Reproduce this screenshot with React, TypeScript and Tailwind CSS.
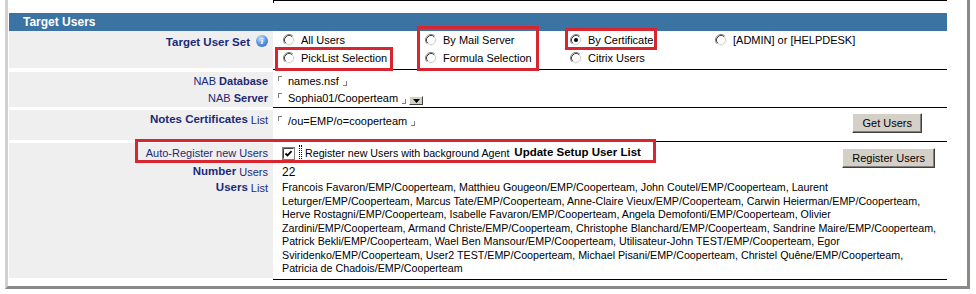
import type { ReactNode } from 'react';

const users = [
    'Francois Favaron/EMP/Cooperteam, Matthieu Gougeon/EMP/Cooperteam, John Coutel/EMP/Cooperteam, Laurent',
    'Leturger/EMP/Cooperteam, Marcus Tate/EMP/Cooperteam, Anne-Claire Vieux/EMP/Cooperteam, Carwin Heierman/EMP/Cooperteam,',
    'Herve Rostagni/EMP/Cooperteam, Isabelle Favaron/EMP/Cooperteam, Angela Demofonti/EMP/Cooperteam, Olivier',
    'Zardini/EMP/Cooperteam, Armand Christe/EMP/Cooperteam, Christophe Blanchard/EMP/Cooperteam, Sandrine Maire/EMP/Cooperteam,',
    'Patrick Bekli/EMP/Cooperteam, Wael Ben Mansour/EMP/Cooperteam, Utilisateur-John TEST/EMP/Cooperteam, Egor',
    'Sviridenko/EMP/Cooperteam, User2 TEST/EMP/Cooperteam, Michael Pisani/EMP/Cooperteam, Christel Quêne/EMP/Cooperteam,',
    'Patricia de Chadois/EMP/Cooperteam',
];

function Radio({ checked = false }: { checked?: boolean }) {
    return (
        <svg width="12" height="12" viewBox="0 0 12 12" className="shrink-0">
            <circle cx="6" cy="6" r="5" fill="#fff" />
            <path d="M2.11 9.89 A5.5 5.5 0 0 1 9.89 2.11" fill="none" stroke="#808080" />
            <path d="M9.89 2.11 A5.5 5.5 0 0 1 2.11 9.89" fill="none" stroke="#f4f4f4" />
            <path d="M2.82 9.18 A4.5 4.5 0 0 1 9.18 2.82" fill="none" stroke="#404040" />
            <path d="M9.18 2.82 A4.5 4.5 0 0 1 2.82 9.18" fill="none" stroke="#d4d0c8" />
            {checked && <circle cx="6" cy="6" r="2" fill="#000" />}
        </svg>
    );
}

function Option({ label, checked }: { label: string; checked?: boolean }) {
    return (
        <div className="flex items-center h-[18px] gap-[6px]">
            <Radio checked={checked} />
            <span>{label}</span>
        </div>
    );
}

// notes field delimiters around editable values
function Field({ children }: { children: ReactNode }) {
    return (
        <span className="inline-flex items-center">
            <span className="self-start mt-[3px] w-[4px] h-[5px] border-t border-l border-[#808080]" />
            <span className="ml-[6px]">{children}</span>
            <span className="self-end mb-[3px] ml-[4px] w-[4px] h-[5px] border-b border-r border-[#808080]" />
        </span>
    );
}

function Button({ children }: { children: ReactNode }) {
    return (
        <button className="h-[20px] px-[9px] bg-[#d4d0c8] text-[11px] text-black border border-t-white border-l-white border-r-[#404040] border-b-[#404040] shadow-[inset_-1px_-1px_0_#808080]">
            {children}
        </button>
    );
}

function Label({ children, className = '' }: { children: ReactNode; className?: string }) {
    return <div className={`flex items-center justify-end pr-[5px] text-[#1c2a78] text-[11px] ${className}`}>{children}</div>;
}

export default function App() {
    return (
        <div className="w-[976px] h-[294px] bg-white text-[11px] text-black" style={{ fontFamily: '"Liberation Sans", Arial, sans-serif' }}>
            <div className="relative ml-[5px] w-[965px] h-[289px] border-l-[3px] border-l-[#d0d0d0] border-r-[3px] border-r-[#8a8a86] border-b-[3px] border-b-[#8a8a86] pl-[1px]">
                <div className="ml-[264px] w-[674px] h-[3px] border-t border-l border-black" />

                <div className="mt-[10px] w-[938px] h-[18px] bg-[#3b73a3] text-white text-[12px] font-bold pl-[14px] flex items-center">
                    Target Users
                </div>

                {/* target user set */}
                <div className="flex w-[938px]">
                    <div className="w-[264px] shrink-0 bg-[#efefef] h-[37px] flex justify-end pr-[5px] pt-[3px] text-[#1c2a78]">
                        <span className="text-[11.5px] font-bold h-[16px] leading-[16px]">Target User Set</span>
                        <span className="ml-[6px] mt-[1px] w-[12px] h-[12px] rounded-full bg-[radial-gradient(circle_at_40%_30%,#cfe2fb,#4f8fdc_55%,#2a62b4)] text-white text-[9px] font-bold italic leading-[12px] text-center" style={{ fontFamily: 'Georgia, "Liberation Serif", serif' }}>i</span>
                    </div>
                    <div className="flex-1 h-[39px] border-b border-black pl-[10px] grid grid-cols-[142px_145px_145px_1fr] grid-rows-[18px_18px]">
                        <Option label="All Users" />
                        <Option label="By Mail Server" />
                        <Option label="By Certificate" checked />
                        <Option label="[ADMIN] or [HELPDESK]" />
                        <Option label="PickList Selection" />
                        <Option label="Formula Selection" />
                        <Option label="Citrix Users" />
                    </div>
                </div>

                {/* nab */}
                <div className="flex w-[938px] mt-[2px]">
                    <div className="w-[264px] shrink-0 bg-[#efefef] h-[35px]">
                        <Label className="h-[18px]">NAB&nbsp;<b>Database</b></Label>
                        <Label className="h-[17px]">NAB&nbsp;<b>Server</b></Label>
                    </div>
                    <div className="flex-1 h-[36px] border-b border-black pl-[5px]">
                        <div className="h-[18px] flex items-center"><Field>names.nsf</Field></div>
                        <div className="h-[17px] flex items-center">
                            <Field>Sophia01/Cooperteam</Field>
                            <span className="ml-[3px] mt-[4px] w-[14px] h-[9px] bg-[#d4d0c8] border border-t-white border-l-white border-r-[#404040] border-b-[#404040] flex items-center justify-center">
                                <svg width="7" height="4" viewBox="0 0 7 4"><path d="M0 0 H7 L3.5 4 Z" fill="#000" /></svg>
                            </span>
                        </div>
                    </div>
                </div>

                {/* certificates */}
                <div className="flex w-[938px] mt-[2px]">
                    <div className="w-[264px] shrink-0 bg-[#efefef] h-[30px] pt-[2px]">
                        <Label className="h-[16px]"><b className="text-[11.5px]">Notes Certificates</b>&nbsp;List</Label>
                    </div>
                    <div className="flex-1 h-[32px] border-b border-black pl-[5px] flex justify-between">
                        <div className="h-[18px] mt-[2px] flex items-center"><Field>/ou=EMP/o=cooperteam</Field></div>
                        <div className="mt-[3px] mr-[25px]"><Button>Get Users</Button></div>
                    </div>
                </div>

                {/* register + users */}
                <div className="flex w-[938px] mt-[1px]">
                    <div className="w-[264px] shrink-0 bg-[#efefef] h-[135px]">
                        <Label className="h-[20px]">Auto-Register new Users</Label>
                        <Label className="h-[18px]"><b className="text-[11.5px]">Number</b>&nbsp;Users</Label>
                        <Label className="h-[14px]"><b className="text-[11.5px]">Users</b>&nbsp;List</Label>
                    </div>
                    <div className="flex-1 min-w-0 h-[137px] border-b border-black pl-[9px]">
                        <div className="h-[20px] flex items-start justify-between">
                            <div className="flex items-center h-[20px]">
                                <svg width="13" height="13" viewBox="0 0 13 13" className="shrink-0">
                                    <rect x="0.5" y="0.5" width="12" height="12" fill="#fff" stroke="#808080" />
                                    <path d="M1.5 11.5 V1.5 H11.5" fill="none" stroke="#404040" />
                                    <path d="M3.5 6.5 L5.5 8.5 L9.5 4.2" fill="none" stroke="#000" strokeWidth="1.8" />
                                </svg>
                                <span className="ml-[4px] w-[3px] h-[16px] border-l border-r border-dotted border-black" />
                                <span className="ml-[3px] text-[10.7px]">Register new Users with background Agent</span>
                                <b className="ml-[5px] text-[11.5px]">Update Setup User List</b>
                            </div>
                            <div className="mt-[5px] mr-[12px]"><Button>Register Users</Button></div>
                        </div>
                        <div className="h-[18px] flex items-center text-[12px]">22</div>
                        <div className="leading-[13.5px] whitespace-nowrap text-[10.7px]">
                            {users.map((line, i) => (
                                <div key={i}>{line}</div>
                            ))}
                        </div>
                    </div>
                </div>

                {/* highlight boxes */}
                <div className="absolute left-[267px] top-[47px] w-[118px] h-[24px] border-[3px] border-[#d7262f]" />
                <div className="absolute left-[409px] top-[26px] w-[122px] h-[45px] border-[3px] border-[#d7262f]" />
                <div className="absolute left-[557px] top-[28px] w-[92px] h-[22px] border-[3px] border-[#d7262f]" />
                <div className="absolute left-[127px] top-[139px] w-[521px] h-[24px] border-[3px] border-[#d7262f]" />
            </div>
        </div>
    );
}
